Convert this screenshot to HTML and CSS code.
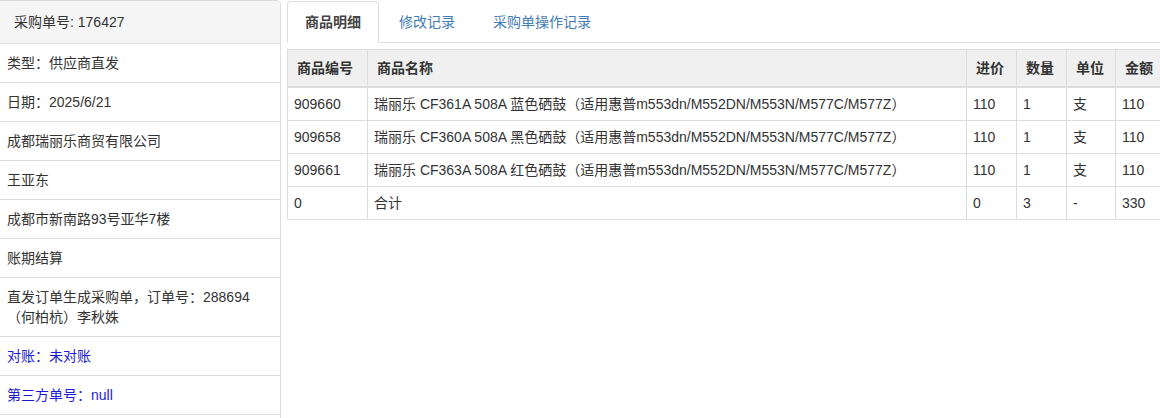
FILE: index.html
```html
<!DOCTYPE html>
<html lang="zh-CN">
<head>
  <meta charset="UTF-8">
  <title>采购单详情</title>
  <link rel="stylesheet" href="styles.css">
</head>
<body>
  <div class="page">
    <aside class="panel">
      <div class="panel-heading">采购单号: 176427</div>
      <ul class="list-group">
        <li class="list-item">类型：供应商直发</li>
        <li class="list-item">日期：2025/6/21</li>
        <li class="list-item">成都瑞丽乐商贸有限公司</li>
        <li class="list-item">王亚东</li>
        <li class="list-item">成都市新南路93号亚华7楼</li>
        <li class="list-item">账期结算</li>
        <li class="list-item">直发订单生成采购单，订单号：288694<br>（何柏杭）李秋姝</li>
        <li class="list-item blue">对账：未对账</li>
        <li class="list-item blue">第三方单号：null</li>
        <li class="list-item"></li>
      </ul>
    </aside>

    <main class="content">
      <ul class="nav-tabs">
        <li class="active"><a href="#">商品明细</a></li>
        <li><a href="#">修改记录</a></li>
        <li><a href="#">采购单操作记录</a></li>
      </ul>

      <table class="goods">
        <colgroup>
          <col style="width:80px">
          <col style="width:599px">
          <col style="width:50px">
          <col style="width:50px">
          <col style="width:49px">
          <col style="width:60px">
        </colgroup>
        <thead>
          <tr>
            <th>商品编号</th>
            <th>商品名称</th>
            <th>进价</th>
            <th>数量</th>
            <th>单位</th>
            <th>金额</th>
          </tr>
        </thead>
        <tbody>
          <tr>
            <td>909660</td>
            <td>瑞丽乐 CF361A 508A 蓝色硒鼓（适用惠普m553dn/M552DN/M553N/M577C/M577Z）</td>
            <td>110</td>
            <td>1</td>
            <td>支</td>
            <td>110</td>
          </tr>
          <tr>
            <td>909658</td>
            <td>瑞丽乐 CF360A 508A 黑色硒鼓（适用惠普m553dn/M552DN/M553N/M577C/M577Z）</td>
            <td>110</td>
            <td>1</td>
            <td>支</td>
            <td>110</td>
          </tr>
          <tr>
            <td>909661</td>
            <td>瑞丽乐 CF363A 508A 红色硒鼓（适用惠普m553dn/M552DN/M553N/M577C/M577Z）</td>
            <td>110</td>
            <td>1</td>
            <td>支</td>
            <td>110</td>
          </tr>
          <tr>
            <td>0</td>
            <td>合计</td>
            <td>0</td>
            <td>3</td>
            <td>-</td>
            <td>330</td>
          </tr>
        </tbody>
      </table>
    </main>
  </div>
</body>
</html>
```

FILE: styles.css
```css
html, body {
  margin: 0;
  overflow: hidden;
}

body {
  font-family: "Liberation Sans", Arial, "Noto Sans CJK SC", sans-serif;
  font-size: 14px;
  line-height: 20px;
  color: #333;
  background-color: #fff;
}

.page {
  display: flex;
  align-items: flex-start;
  gap: 6px;
  width: 1160px;
  height: 418px;
  overflow: hidden;
}

.panel {
  box-sizing: border-box;
  flex: 0 0 282px;
  margin-left: -1px;
  border: 1px solid #ddd;
  border-radius: 0 4px 0 0;
  background-color: #fff;
}

.panel-heading {
  padding: 11px 15px 11px 14px;
  background-color: #f5f5f5;
  border-bottom: 1px solid #ddd;
  border-radius: 0 3px 0 0;
}

.list-group {
  list-style: none;
  margin: 0;
  padding: 0;
}

.list-item {
  padding: 9px 10px 9px 7px;
  min-height: 20px;
  border-bottom: 1px solid #ddd;
}

.blue {
  color: #1c1cd6;
}

.content {
  flex: 1;
  min-width: 0;
}

.nav-tabs {
  display: flex;
  list-style: none;
  margin: 1px 0 0 0;
  padding: 0;
  border-bottom: 1px solid #ddd;
}

.nav-tabs li {
  margin-bottom: -1px;
  margin-right: 2px;
}

.nav-tabs a {
  display: block;
  padding: 10px 17px 10px 17px;
  border: 1px solid transparent;
  border-radius: 4px 4px 0 0;
  color: #3f7cb8;
  text-decoration: none;
}

.nav-tabs .active a {
  color: #444;
  font-weight: bold;
  background-color: #fff;
  border-color: #ddd #ddd transparent #ddd;
}

.goods {
  margin-top: 6px;
  border-collapse: collapse;
  table-layout: fixed;
  width: 888px;
}

.goods th,
.goods td {
  border: 1px solid #ddd;
  text-align: left;
  white-space: nowrap;
  overflow: hidden;
}

.goods th {
  padding: 8px 9px;
  background-color: #f0f0f0;
  border-bottom-width: 2px;
  font-weight: bold;
  color: #333;
}

.goods td {
  padding: 6px 6px 6px 6px;
}
```
